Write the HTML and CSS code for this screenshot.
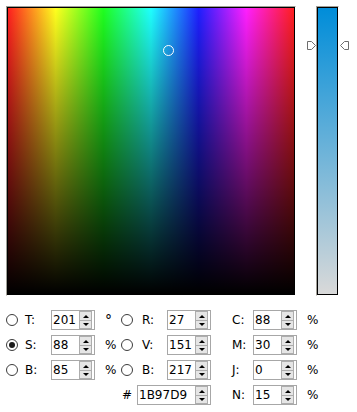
FILE: index.html
```html
<!DOCTYPE html>
<html>
<head>
<meta charset="utf-8">
<link rel="stylesheet" href="styles.css">
</head>
<body>
<div class="picker">
  <div class="top">
    <div class="frame field-frame">
      <div class="field">
        <div class="cursor"></div>
      </div>
    </div>
    <div class="frame slider-frame">
      <div class="slider"></div>
      <svg class="arrow arrow-left" width="10" height="10" viewBox="0 0 10 10"><path d="M0.5 0.5H4.5L8.5 4.5L4.5 8.5H0.5Z" fill="#fff" stroke="#6d6d6d"/></svg>
      <svg class="arrow arrow-right" width="10" height="10" viewBox="0 0 10 10"><path d="M9.5 0.5H5.5L1.5 4.5L5.5 8.5H9.5Z" fill="#fff" stroke="#6d6d6d"/></svg>
    </div>
  </div>

  <div class="controls">
    <span class="radio"></span><span class="lbl l1">T:</span>
    <div class="num"><span class="val">201</span><span class="spin"><span class="up"></span><span class="dn"></span></span></div>
    <span class="unit u1 deg">°</span>
    <span class="radio"></span><span class="lbl l2">R:</span>
    <div class="num"><span class="val">27</span><span class="spin"><span class="up"></span><span class="dn"></span></span></div>
    <span class="lbl l3">C:</span>
    <div class="num"><span class="val">88</span><span class="spin"><span class="up"></span><span class="dn"></span></span></div>
    <span class="unit u3">%</span>

    <span class="radio checked"></span><span class="lbl l1">S:</span>
    <div class="num"><span class="val">88</span><span class="spin"><span class="up"></span><span class="dn"></span></span></div>
    <span class="unit u1">%</span>
    <span class="radio"></span><span class="lbl l2">V:</span>
    <div class="num"><span class="val">151</span><span class="spin"><span class="up"></span><span class="dn"></span></span></div>
    <span class="lbl l3">M:</span>
    <div class="num"><span class="val">30</span><span class="spin"><span class="up"></span><span class="dn"></span></span></div>
    <span class="unit u3">%</span>

    <span class="radio"></span><span class="lbl l1">B:</span>
    <div class="num"><span class="val">85</span><span class="spin"><span class="up"></span><span class="dn"></span></span></div>
    <span class="unit u1">%</span>
    <span class="radio"></span><span class="lbl l2">B:</span>
    <div class="num"><span class="val">217</span><span class="spin"><span class="up"></span><span class="dn"></span></span></div>
    <span class="lbl l3">J:</span>
    <div class="num"><span class="val">0</span><span class="spin"><span class="up"></span><span class="dn"></span></span></div>
    <span class="unit u3">%</span>

    <div class="hex"><span class="hash">#</span>
      <div class="num wide"><span class="val">1B97D9</span><span class="spin"><span class="up"></span><span class="dn"></span></span></div>
    </div>
    <span class="lbl l3">N:</span>
    <div class="num"><span class="val">15</span><span class="spin"><span class="up"></span><span class="dn"></span></span></div>
    <span class="unit u3">%</span>
  </div>
</div>
</body>
</html>
```
FILE: styles.css
```css
html, body {
  margin: 0;
  padding: 0;
  background: #fff;
}
body {
  font-family: "DejaVu Sans", Verdana, sans-serif;
  font-size: 12px;
  color: #000;
}
.picker {
  width: 357px;
  height: 412px;
}
.top {
  display: flex;
  padding: 6px 0 0 6px;
}
.frame {
  border-top: 1px solid #a09e96;
  border-left: 1px solid #a09e96;
  border-right: 1px solid #fff;
  border-bottom: 1px solid #fff;
}
.field {
  position: relative;
  width: 286px;
  height: 286px;
  border: 1px solid #000;
  background:
    linear-gradient(to bottom, rgba(0,0,0,0), #000),
    linear-gradient(to right,
      rgb(255,31,31) 0%,
      rgb(255,255,31) 16.667%,
      rgb(31,255,31) 33.333%,
      rgb(31,255,255) 50%,
      rgb(31,31,255) 66.667%,
      rgb(255,31,255) 83.333%,
      rgb(255,31,31) 100%);
}
.cursor {
  position: absolute;
  left: 155px;
  top: 37px;
  width: 9px;
  height: 9px;
  border: 1px solid #fff;
  border-radius: 50%;
}
.slider-frame {
  position: relative;
  margin-left: 20px;
}
.slider {
  width: 19px;
  height: 286px;
  border: 1px solid #000;
  background: linear-gradient(to bottom, rgb(0,141,217), rgb(217,217,217));
}
.arrow {
  position: absolute;
  top: 34px;
}
.arrow-left { left: -10px; }
.arrow-right { left: 22px; }

.controls {
  display: grid;
  grid-template-columns: 13px 32px 44px 26px 13px 33px 44px 42px 44px auto;
  grid-auto-rows: 20px;
  row-gap: 5px;
  padding-left: 6px;
  margin-top: 14px;
  align-items: center;
}
.radio {
  box-sizing: border-box;
  width: 12px;
  height: 12px;
  border: 1px solid #3c3c3c;
  border-radius: 50%;
  background: #fff;
  display: flex;
  align-items: center;
  justify-content: center;
}
.radio.checked::after {
  content: "";
  width: 6px;
  height: 6px;
  border-radius: 50%;
  background: #1a1a1a;
}
.lbl, .unit {
  line-height: 20px;
  white-space: nowrap;
}
.l1 { padding-left: 6px; }
.l2 { padding-left: 8px; }
.l3 { padding-left: 21px; grid-column: 8; }
.u1 { padding-left: 10px; }
.u3 { padding-left: 10px; }
.deg { font-size: 14px; }
.num {
  box-sizing: border-box;
  width: 44px;
  height: 20px;
  border: 1px solid #a7a7a7;
  display: flex;
  align-items: center;
  background: #fff;
}
.num.wide { width: 74px; }
.val {
  padding-left: 1px;
  flex: 1;
  line-height: 18px;
}
.spin {
  display: flex;
  flex-direction: column;
  width: 13px;
  height: 18px;
  margin-right: 2px;
}
.spin span {
  box-sizing: border-box;
  flex: 1;
  border: 1px solid #adadad;
  background: #e5e5e5;
  display: flex;
  align-items: center;
  justify-content: center;
}
.spin .up { border-bottom: none; }
.spin .up::after {
  content: "";
  border-left: 3px solid transparent;
  border-right: 3px solid transparent;
  border-bottom: 3px solid #000;
  margin-top: 1px;
}
.spin .dn::after {
  content: "";
  border-left: 3px solid transparent;
  border-right: 3px solid transparent;
  border-top: 3px solid #000;
}
.hex {
  grid-column: 5 / 8;
  display: flex;
  justify-content: flex-end;
  align-items: center;
  gap: 5px;
}
.hash { line-height: 20px; }
```
